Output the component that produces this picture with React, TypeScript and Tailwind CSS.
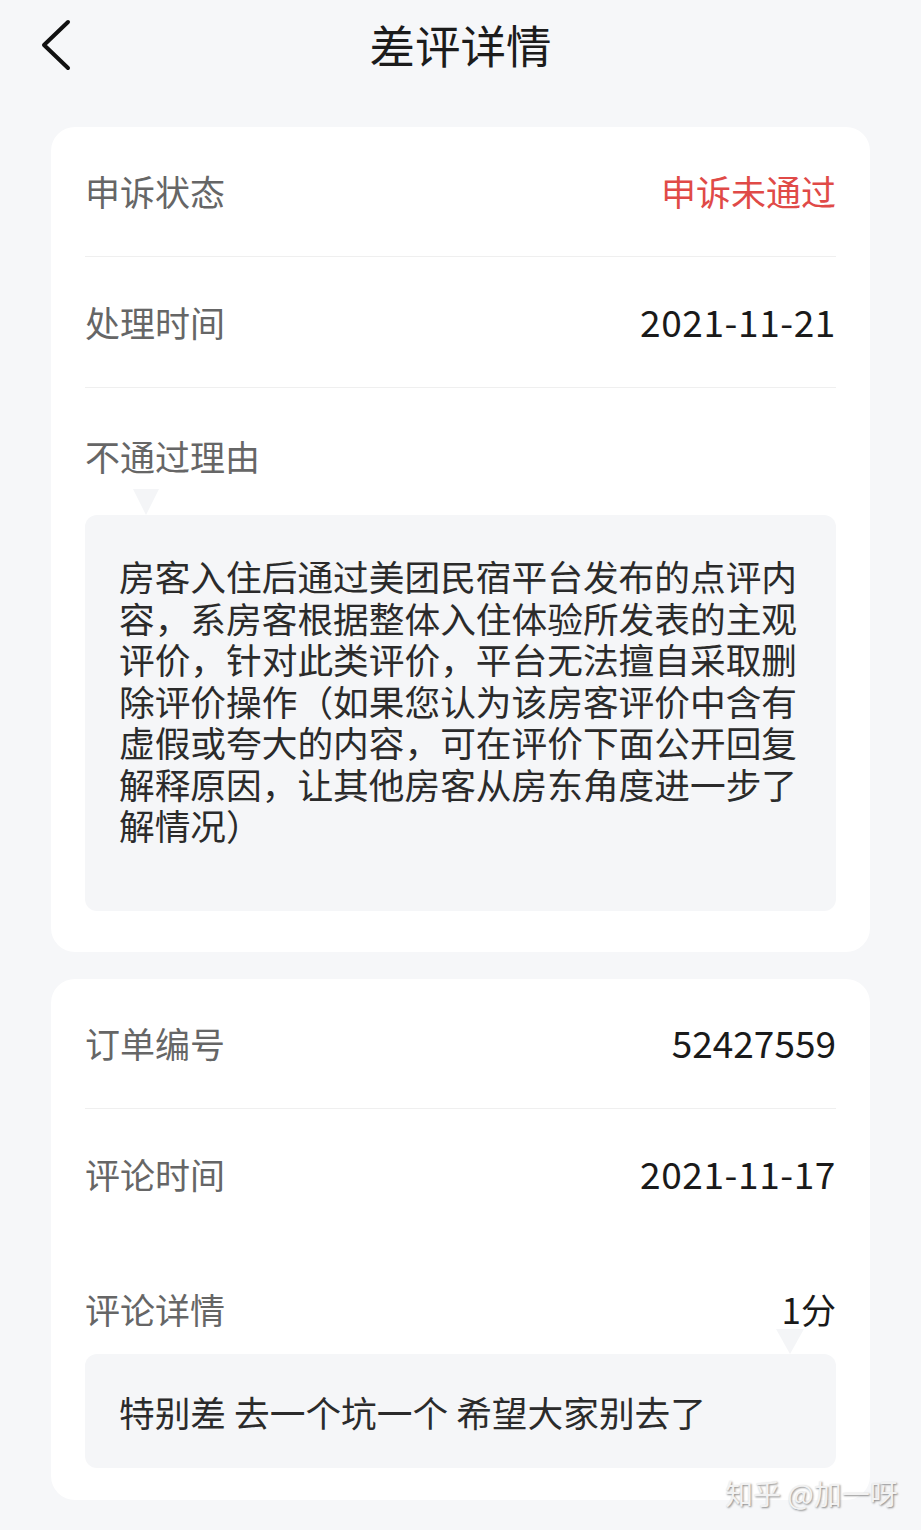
export default function App() {
    return (
        <div className="relative h-[1530px] w-[921px] overflow-hidden bg-[#f6f7f9] font-['Noto_Sans_CJK_SC','Noto_Sans',sans-serif]">
            <header className="relative flex h-[90px] items-center justify-center">
                <svg className="absolute left-[36px] top-[16px]" width="40" height="58" viewBox="0 0 40 58" fill="none">
                    <path d="M32 6 L8 29 L32 52" stroke="#111" strokeWidth="4" strokeLinecap="round" strokeLinejoin="round" />
                </svg>
                <h1 className="text-[45.5px] leading-none text-[#1c1c1c]">差评详情</h1>
            </header>

            <section className="mx-[51px] mt-[37px] rounded-[24px] bg-white px-[34px] pb-[41px]">
                <div className="flex h-[130px] items-center justify-between border-b border-[#efefef]">
                    <span className="text-[35px] text-[#666]">申诉状态</span>
                    <span className="text-[35px] text-[#e04a47]">申诉未通过</span>
                </div>
                <div className="flex h-[131px] items-center justify-between border-b border-[#efefef]">
                    <span className="text-[35px] text-[#666]">处理时间</span>
                    <span className="text-[37px] tracking-[0.6px] text-[#1a1a1a]">2021-11-21</span>
                </div>
                <div className="pt-[48px]">
                    <p className="text-[35px] leading-[40px] text-[#666]">不通过理由</p>
                    <div className="ml-[48px] mt-[13px] h-0 w-0 border-x-[13px] border-t-[26px] border-x-transparent border-t-[#f4f5f7]" />
                    <div className="rounded-[12px] bg-[#f5f6f8] pl-[34px] pr-[34px] pt-[40px] pb-[65px] text-[35.7px] leading-[41.5px] text-[#2b2b2b]">
                        房客入住后通过美团民宿平台发布的点评内容，系房客根据整体入住体验所发表的主观评价，针对此类评价，平台无法擅自采取删除评价操作（如果您认为该房客评价中含有虚假或夸大的内容，可在评价下面公开回复解释原因，让其他房客从房东角度进一步了解情况）
                    </div>
                </div>
            </section>

            <section className="mx-[51px] mt-[27px] rounded-[24px] bg-white px-[34px] pb-[32px]">
                <div className="flex h-[130px] items-center justify-between border-b border-[#efefef]">
                    <span className="text-[35px] text-[#666]">订单编号</span>
                    <span className="text-[37px] text-[#1a1a1a]">52427559</span>
                </div>
                <div className="flex h-[131px] items-center justify-between">
                    <span className="text-[35px] text-[#666]">评论时间</span>
                    <span className="text-[37px] tracking-[0.6px] text-[#1a1a1a]">2021-11-17</span>
                </div>
                <div className="pt-[49px]">
                    <div className="flex items-center justify-between">
                        <span className="text-[35px] leading-[40px] text-[#666]">评论详情</span>
                        <span className="text-[35px] leading-[40px] text-[#1a1a1a]">1分</span>
                    </div>
                    <div className="flex justify-end pr-[32px]">
                        <div className="h-0 w-0 border-x-[14px] border-t-[25px] border-x-transparent border-t-[#f4f5f7]" />
                    </div>
                    <div className="rounded-[12px] bg-[#f5f6f8] px-[34px] pt-[37px] pb-[36px] text-[35.7px] leading-[41.5px] text-[#2b2b2b]">
                        特别差 去一个坑一个 希望大家别去了
                    </div>
                </div>
            </section>

            <div className="absolute left-[725px] top-[1475px] text-[28px] leading-[36px] text-[#f2f2f2] [text-shadow:1px_1px_2px_rgba(0,0,0,0.45)]">
                知乎 @加一呀
            </div>
        </div>
    );
}
